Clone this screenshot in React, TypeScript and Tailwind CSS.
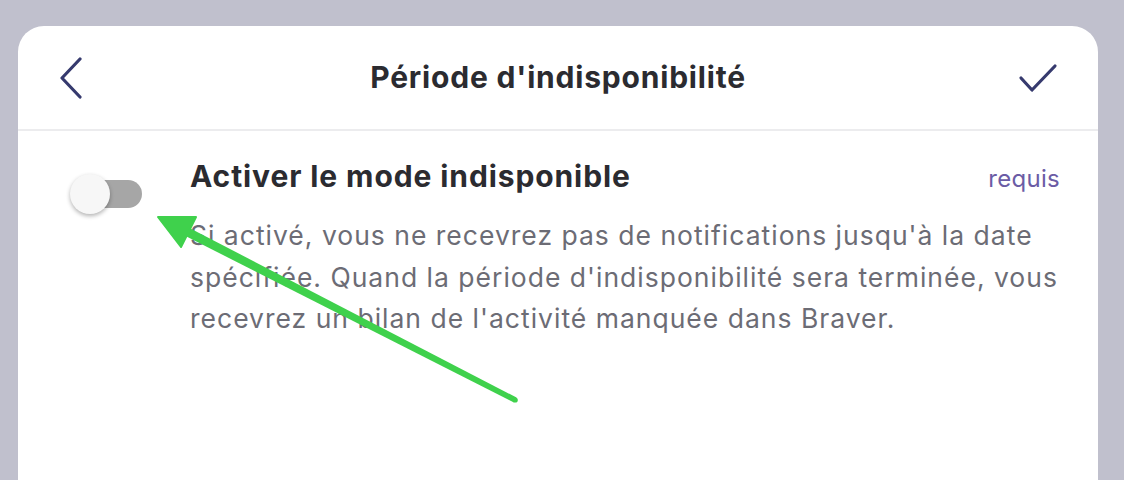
import { useState } from "react";

function BackIcon() {
  return (
    <svg width="26" height="42" viewBox="0 0 26 42" fill="none">
      <path d="M22 2 L4 21 L22 40" stroke="#363a6e" strokeWidth="3.2" strokeLinecap="round" strokeLinejoin="round" />
    </svg>
  );
}

function CheckIcon() {
  return (
    <svg width="40" height="30" viewBox="0 0 40 30" fill="none">
      <path d="M3 15 L14 27 L37 3" stroke="#363a6e" strokeWidth="3.2" strokeLinecap="round" strokeLinejoin="round" />
    </svg>
  );
}

// annotation arrow drawn over the page
function Arrow() {
  return (
    <svg className="pointer-events-none absolute left-0 top-0" width="1124" height="480" viewBox="0 0 1124 480">
      <polygon points="158,217 196,217 181,247" fill="#3fd14c" strokeLinejoin="round" stroke="#3fd14c" strokeWidth="2" />
      <polygon points="185.5,236 189.5,228 516.5,397.5 514,402.5" fill="#3fd14c" />
      <circle cx="515.2" cy="400" r="2.6" fill="#3fd14c" />
    </svg>
  );
}

export default function App() {
  const [enabled, setEnabled] = useState(false);

  return (
    <div className="relative h-[480px] w-[1124px] overflow-hidden bg-[#c0c0cd] pl-[18px] pr-[26px] pt-[26px] font-['Inter',sans-serif]">
      <div className="h-[480px] rounded-t-[26px] bg-white">
        {/* ── Header ─────────────────────────── */}
        <header className="flex h-[105px] items-center justify-between border-b-2 border-[#ececee] px-[40px]">
          <button type="button" className="flex h-10 w-10 items-center">
            <BackIcon />
          </button>
          <h1 className="text-[30px] font-bold tracking-[0.8px] text-[#2b2b30]">Période d'indisponibilité</h1>
          <button type="button" className="flex h-10 w-10 items-center justify-end">
            <CheckIcon />
          </button>
        </header>

        {/* ── Toggle row ─────────────────────── */}
        <div className="flex pl-[52px] pr-[38px] pt-[24px]">
          <button
            type="button"
            onClick={() => setEnabled(!enabled)}
            className="relative mt-[19px] h-[40px] w-[72px] shrink-0"
          >
            <span className="absolute left-[4px] top-[6px] h-[28px] w-[68px] rounded-full bg-[#a6a6a6]" />
            <span className="absolute left-0 top-0 h-[40px] w-[40px] rounded-full bg-[#f7f7f7] shadow-[0_2px_4px_rgba(0,0,0,0.3)]" />
          </button>
          <div className="ml-[48px] flex-1">
            <div className="flex items-center justify-between">
              <h2 className="text-[30px] leading-[40px] font-bold tracking-[0.9px] text-[#2b2b30]">Activer le mode indisponible</h2>
              <span className="mt-[6px] text-[24px] tracking-[0.3px] text-[#6b5ca5]">requis</span>
            </div>
            <p className="mt-[18px] text-[26.5px] leading-[41.5px] tracking-[1px] text-[#6c6c75]">
              Si activé, vous ne recevrez pas de notifications jusqu'à la date spécifiée. Quand la période d'indisponibilité sera terminée, vous recevrez un bilan de l'activité manquée dans Braver.
            </p>
          </div>
        </div>
      </div>
      <Arrow />
    </div>
  );
}
